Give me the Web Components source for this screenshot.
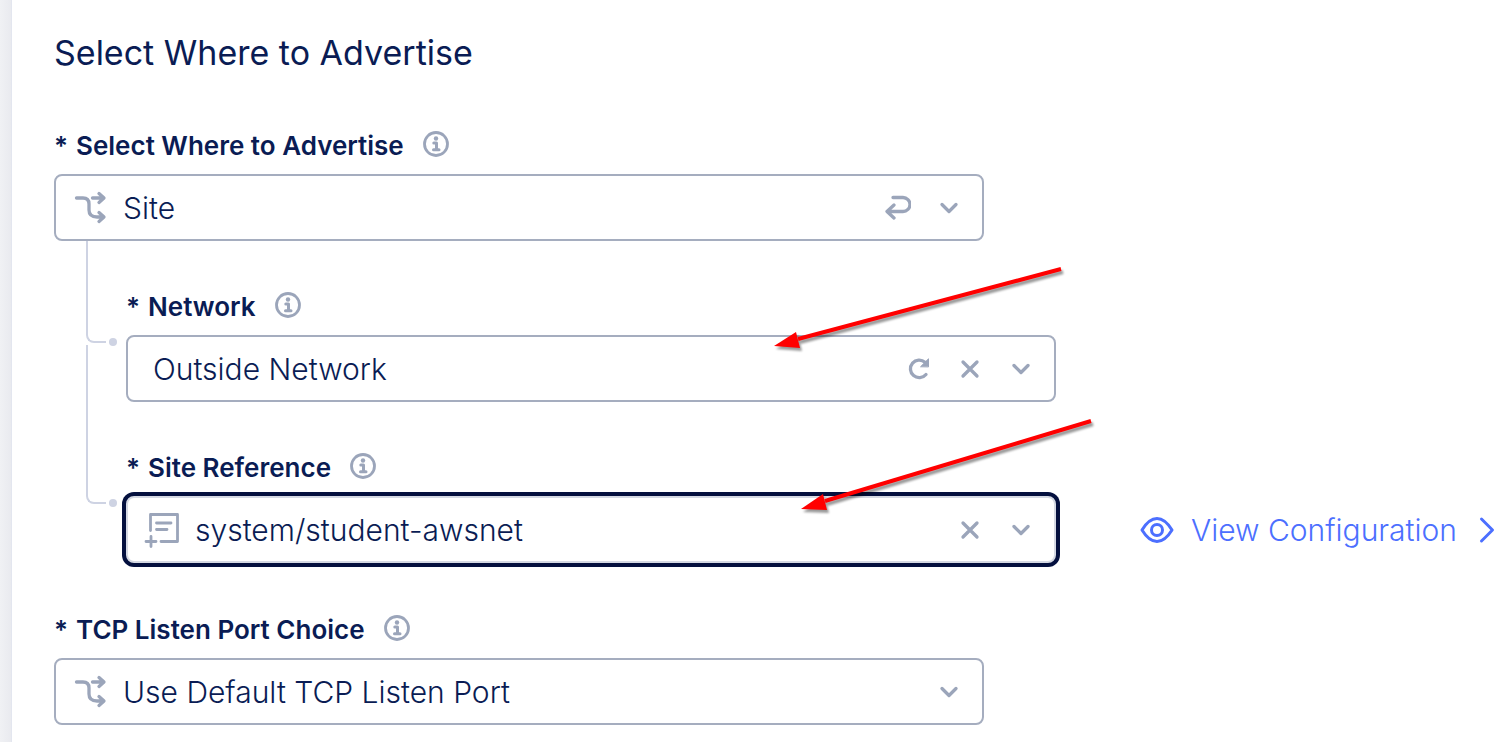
<!DOCTYPE html>
<html lang="en">
<head>
<meta charset="utf-8">
<title>Select Where to Advertise</title>
<style>
  html, body { margin: 0; height: 100%; }
  body { font-family: Inter, "Liberation Sans", sans-serif; color: #0a1c54; background: #fff; }
</style>
</head>
<body>
<side-panel>
  <h2 slot="title">Select Where to Advertise</h2>
  <choice-field label="Select Where to Advertise" value="Site" icon="fork" actions="back"></choice-field>
  <tree-item>
    <choice-field label="Network" value="Outside Network" actions="reload clear"></choice-field>
    <callout-arrow slot="callout" style="left:712px;top:20px" width="310" height="100" line="295,8 32,78" head="8,85 30,71 34,87"></callout-arrow>
  </tree-item>
  <tree-item continued>
    <choice-field label="Site Reference" value="system/student-awsnet" icon="form" actions="clear" active></choice-field>
    <view-link slot="aside" href="#configuration">View Configuration</view-link>
    <callout-arrow slot="callout" style="left:739px;top:10px" width="314" height="110" line="298,9 32,89" head="8,97 30,82 34,98"></callout-arrow>
  </tree-item>
  <choice-field class="next" label="TCP Listen Port Choice" value="Use Default TCP Listen Port" icon="fork"></choice-field>
</side-panel>

<script>
const ICONS = {
  fork: `<svg width="36" height="36" viewBox="0 0 36 36"><path d="M4.5 8H11Q17 8 17 14V20Q17 27 25 27H31M20.500 8H31M27 3.500l5 4.500-5 4.500M27 22.500l5 4.500-5 4.500"/></svg>`,
  form: `<svg width="36" height="36" viewBox="0 0 36 36"><path d="M6.500 18.500V2.500H33.500V29.500H17M12.500 11H27M12.500 17.500H23M7 24.500v10M2 29.500H12" stroke-width="2.800"/></svg>`,
  info: `<svg width="26" height="26" viewBox="0 0 26 26"><circle cx="13" cy="13" r="11.500" stroke-width="2.800"/><circle cx="13" cy="7.500" r="2.200" fill="currentColor" stroke="none"/><path d="M10.800 12H13.500V18.500M10.500 18.800H16" stroke-width="3"/></svg>`,
  back: `<svg width="26" height="26" viewBox="0 0 26 26"><path d="M8 2.500H18A7 7 0 0 1 18 16.500H3M9 10l-7 6.500 7 6.500"/></svg>`,
  reload: `<svg width="26" height="26" viewBox="0 0 26 26"><path d="M19 6.200A8.800 8.800 0 1 0 20 18.500"/><path d="M14.800 10.500L22.500 2.800V10.500z" fill="currentColor" stroke="currentColor" stroke-width="1"/></svg>`,
  clear: `<svg width="26" height="26" viewBox="0 0 26 26"><path d="M6 6l14 14M20 6l-14 14"/></svg>`,
  down: `<svg width="26" height="26" viewBox="0 0 26 26"><path d="M6 9.500l7 7 7-7"/></svg>`
};
const ACTION_NAMES = { back: "Reset choice", reload: "Reload", clear: "Clear" };

customElements.define("side-panel", class extends HTMLElement {
  constructor() {
    super();
    this.attachShadow({ mode: "open" }).innerHTML = `
      <style>
        :host { display: flex; min-height: 100%; background: linear-gradient(90deg, #f0f1f4, #e9eaef 11px, #fff 11px); }
        main { flex: 1; min-width: 0; margin-left: 11px; border-left: 1px solid #e3e6ef; background: #fff; padding: 30px 12px 16px 42px; }
        ::slotted(h2) { margin: 0 0 55px; font-size: 34px; line-height: 46px; font-weight: 400; }
        ::slotted(.next) { margin-top: 52px; }
      </style>
      <main><slot name="title"></slot><slot></slot></main>`;
  }
});

customElements.define("choice-field", class extends HTMLElement {
  connectedCallback() {
    const label = this.getAttribute("label");
    const value = this.getAttribute("value");
    const icon = this.getAttribute("icon");
    const actions = (this.getAttribute("actions") || "").split(" ").filter(Boolean);
    this.attachShadow({ mode: "open" }).innerHTML = `
      <style>
        :host { display: block; width: 100%; max-width: 930px; }
        .head { display: flex; align-items: center; height: 30px; margin-bottom: 13px; }
        label { display: flex; gap: 8px; font-size: 26px; line-height: 30px; font-weight: 600; }
        button { display: flex; padding: 0; border: 0; background: none; color: inherit; cursor: pointer; }
        svg { display: block; fill: none; stroke: currentColor; stroke-width: 3.3; stroke-linecap: round; stroke-linejoin: round; }
        .head button { margin-left: 19px; margin-bottom: 4px; color: #9ba5ba; }
        .box { box-sizing: border-box; display: flex; align-items: center; height: 67px; border: 2px solid #a5adbf; border-radius: 8px;
               padding: 0 20px 0 16px; color: #9ba5ba; background: #fff; }
        :host([active]) .box { border-color: #d5d9e3; box-shadow: 0 0 0 4px #04103e; }
        .lead { margin-right: 15px; }
        select { flex: 1; min-width: 0; appearance: none; border: 0; outline: 0; background: none; padding: 0; margin: 0;
                 font: 350 30px/40px Inter, "Liberation Sans", sans-serif; color: #0a1c54; }
        select:first-child { padding-left: 9px; }
        .tail { display: flex; gap: 25px; }
      </style>
      <div class="head">
        <label for="choice"><span>*</span><span>${label}</span></label>
        <button type="button" aria-label="About ${label}">${ICONS.info}</button>
      </div>
      <div class="box">
        ${icon ? `<span class="lead">${ICONS[icon]}</span>` : ""}<select id="choice"><option>${value}</option></select>
        <div class="tail">
          ${actions.map(a => `<button type="button" aria-label="${ACTION_NAMES[a]}">${ICONS[a]}</button>`).join("")}
          <span>${ICONS.down}</span>
        </div>
      </div>`;
  }
});

customElements.define("tree-item", class extends HTMLElement {
  constructor() {
    super();
    this.attachShadow({ mode: "open" }).innerHTML = `
      <style>
        :host { display: flex; position: relative; }
        .gutter { flex: 0 0 72px; box-sizing: border-box; padding-left: 32px; display: flex; align-items: flex-start; }
        .branch { box-sizing: border-box; width: 20px; height: 102px; border: solid #ced3e3; border-width: 0 0 2px 2px; border-bottom-left-radius: 8px; }
        .dot { width: 8px; height: 8px; border-radius: 50%; background: #ced3e3; margin: 97px 0 0 3px; }
        :host([continued]) .branch { height: 159px; margin-top: -57px; }
        .field { flex: 0 1 930px; min-width: 0; padding-top: 51px; }
        .aside { display: flex; align-items: center; height: 67px; margin: 94px 0 0 84px; }
        ::slotted(callout-arrow) { position: absolute; }
      </style>
      <div class="gutter"><div class="branch"></div><div class="dot"></div></div>
      <div class="field"><slot></slot></div>
      <div class="aside"><slot name="aside"></slot></div>
      <slot name="callout"></slot>`;
  }
});

customElements.define("view-link", class extends HTMLElement {
  connectedCallback() {
    this.attachShadow({ mode: "open" }).innerHTML = `
      <style>
        :host { display: block; }
        a { display: flex; align-items: center; gap: 17px; font-size: 30px; line-height: 40px; font-weight: 300; color: #4c6fff; text-decoration: none; white-space: nowrap; }
        svg { flex: none; fill: none; stroke: currentColor; stroke-width: 3; stroke-linecap: round; stroke-linejoin: round; }
        .go { margin-left: 5px; }
      </style>
      <a href="${this.getAttribute("href")}">
        <svg width="34" height="28" viewBox="0 0 34 28"><path d="M2 14Q9 2.500 17 2.500T32 14Q25 25.500 17 25.500T2 14z"/><circle cx="17" cy="14" r="5.500"/></svg>
        <slot></slot>
        <svg class="go" width="16" height="28" viewBox="0 0 16 28"><path d="M2.500 3L13.500 14 2.500 25"/></svg>
      </a>`;
  }
});

customElements.define("callout-arrow", class extends HTMLElement {
  connectedCallback() {
    const w = this.getAttribute("width"), h = this.getAttribute("height");
    this.attachShadow({ mode: "open" }).innerHTML = `
      <style>
        :host { display: block; pointer-events: none; }
        svg { display: block; filter: drop-shadow(2px 3px 1px rgba(0,0,0,.4)); }
      </style>
      <svg width="${w}" height="${h}" aria-hidden="true"><polyline points="${this.getAttribute("line")}" fill="none" stroke="#f00" stroke-width="4"/><polygon points="${this.getAttribute("head")}" fill="#f00"/></svg>`;
  }
});
</script>
</body>
</html>
